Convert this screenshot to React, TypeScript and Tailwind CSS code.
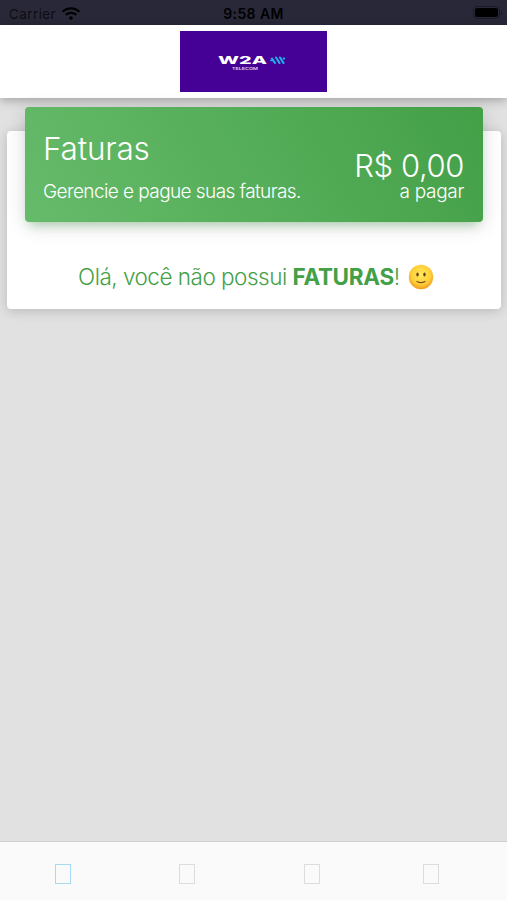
import { FaWifi } from "react-icons/fa";

const tabs = [
  { id: "faturas", active: true, style: "ml-[55px]" },
  { id: "suporte", active: false, style: "ml-[108px]" },
  { id: "consumo", active: false, style: "ml-[109px]" },
  { id: "perfil", active: false, style: "ml-[103px]" },
];

const StatusBar = () => {
  return (
    <div className="grid h-[25px] grid-cols-3 items-center bg-[#282838] pt-[3px] pr-[5px] pl-[9px] font-[Inter,sans-serif] text-[13.5px] text-black/70">
      <div className="flex items-center gap-1.5">
        <span className="tracking-[0.4px]">Carrier</span>
        <FaWifi className="-mt-0.5 h-[17px] w-[18px] text-black" />
      </div>
      <span className="-mt-px pr-1 text-center text-[14px] font-semibold tracking-[0.4px] whitespace-nowrap text-black">
        9:58 AM
      </span>
      <div className="-mt-[3px] flex items-center justify-end gap-px">
        <div className="rounded-[4px] border border-black/30 p-px">
          <div className="h-[9px] w-[23px] rounded-[2px] bg-black" />
        </div>
        <div className="h-1 w-px rounded-r bg-black/40" />
      </div>
    </div>
  );
};

const Logo = () => {
  return (
    <svg viewBox="0 0 147 61" className="h-[61px] w-[147px] bg-[#450096]">
      <g
        fill="#fff"
        fontFamily="Inter, 'Liberation Sans', sans-serif"
        fontWeight="800"
      >
        <text x="38" y="33.300" fontSize="11" textLength="49" lengthAdjust="spacingAndGlyphs">
          W2A
        </text>
        <text
          x="52"
          y="39"
          fontSize="3.600"
          fontWeight="600"
          opacity="0.8"
          textLength="26"
          lengthAdjust="spacingAndGlyphs"
        >
          TELECOM
        </text>
      </g>
      <g stroke="#1fb2e8" strokeWidth="2.100" strokeLinecap="round" fill="none">
        <path d="M92 27.500l3 4.500M96 26.500l3.500 5.500M100 26.500l3.500 5.500" />
        <path d="M91 29.300h1.500M103.500 27.500h.8" strokeWidth="1.800" />
      </g>
    </svg>
  );
};

const InvoiceBanner = () => {
  return (
    <div className="mx-[18px] -mt-[25px] flex h-[115px] justify-between rounded bg-linear-60 from-[#66bb6a] to-[#43a047] pr-[19px] pl-[18px] text-white shadow-[0_4px_20px_rgba(0,0,0,0.14),0_7px_10px_-5px_rgba(76,175,80,0.4)]">
      <div className="pt-[22px]">
        <h1 className="text-[31.5px] leading-[40px] font-light tracking-[-0.2px]">
          Faturas
        </h1>
        <p className="mt-[12px] text-[19px] leading-[22px] font-light tracking-[-0.58px] whitespace-nowrap">
          Gerencie e pague suas faturas.
        </p>
      </div>
      <div className="pt-[43px] text-right whitespace-nowrap">
        <p className="text-[31px] leading-[31px] font-light tracking-[-0.4px]">
          R$ 0,00
        </p>
        <p className="text-[19px] leading-[22px] font-light tracking-[-0.3px]">
          a pagar
        </p>
      </div>
    </div>
  );
};

const App = () => {
  return (
    <div className="flex h-[900px] w-[507px] flex-col overflow-hidden bg-[#e1e1e1] font-[Inter,'Liberation_Sans',sans-serif]">
      <StatusBar />
      <header className="flex h-[73px] shrink-0 items-center justify-center bg-white shadow-[0_2px_10px_rgba(0,0,0,0.3)]">
        <Logo />
      </header>
      <main className="flex-1 pt-[33px] pr-[6px] pl-[7px]">
        <section className="h-[178px] rounded bg-white pt-px shadow-[0_2px_12px_rgba(0,0,0,0.18)]">
          <InvoiceBanner />
          <p className="mt-[39px] flex items-center justify-center pl-1 text-[22.5px] leading-8 font-light tracking-[-0.3px] whitespace-pre text-[#43a047]">
            <span className="tracking-[-0.5px]">Olá, você não possui </span>
            <strong className="font-bold">FATURAS</strong>
            <span>! </span>
            <svg viewBox="0 0 26 26" className="ml-0.5 size-[26px]">
              <defs>
                <radialGradient id="face" cx="50%" cy="40%" r="60%">
                  <stop offset="0" stopColor="#ffe95c" />
                  <stop offset="0.65" stopColor="#ffcf3a" />
                  <stop offset="1" stopColor="#f29a1f" />
                </radialGradient>
              </defs>
              <circle cx="13" cy="13" r="12.200" fill="url(#face)" />
              <ellipse cx="9.500" cy="10.500" rx="1.200" ry="1.900" fill="#61401c" />
              <ellipse cx="16.500" cy="10.500" rx="1.200" ry="1.900" fill="#61401c" />
              <path
                d="M9 17.500q4 2.200 8 0"
                fill="none"
                stroke="#76501d"
                strokeWidth="1.200"
                strokeLinecap="round"
              />
            </svg>
          </p>
        </section>
      </main>
      <nav className="flex h-[59px] shrink-0 items-start border-t border-[#cecece] bg-[#fafafa] pt-[22px]">
        {tabs.map((tab) => (
          <button
            key={tab.id}
            className={`h-[20px] w-[16px] border ${tab.style} ${
              tab.active ? "border-[#a9daf3]" : "border-[#dddddd]"
            }`}
          />
        ))}
      </nav>
    </div>
  );
};

export default App;
